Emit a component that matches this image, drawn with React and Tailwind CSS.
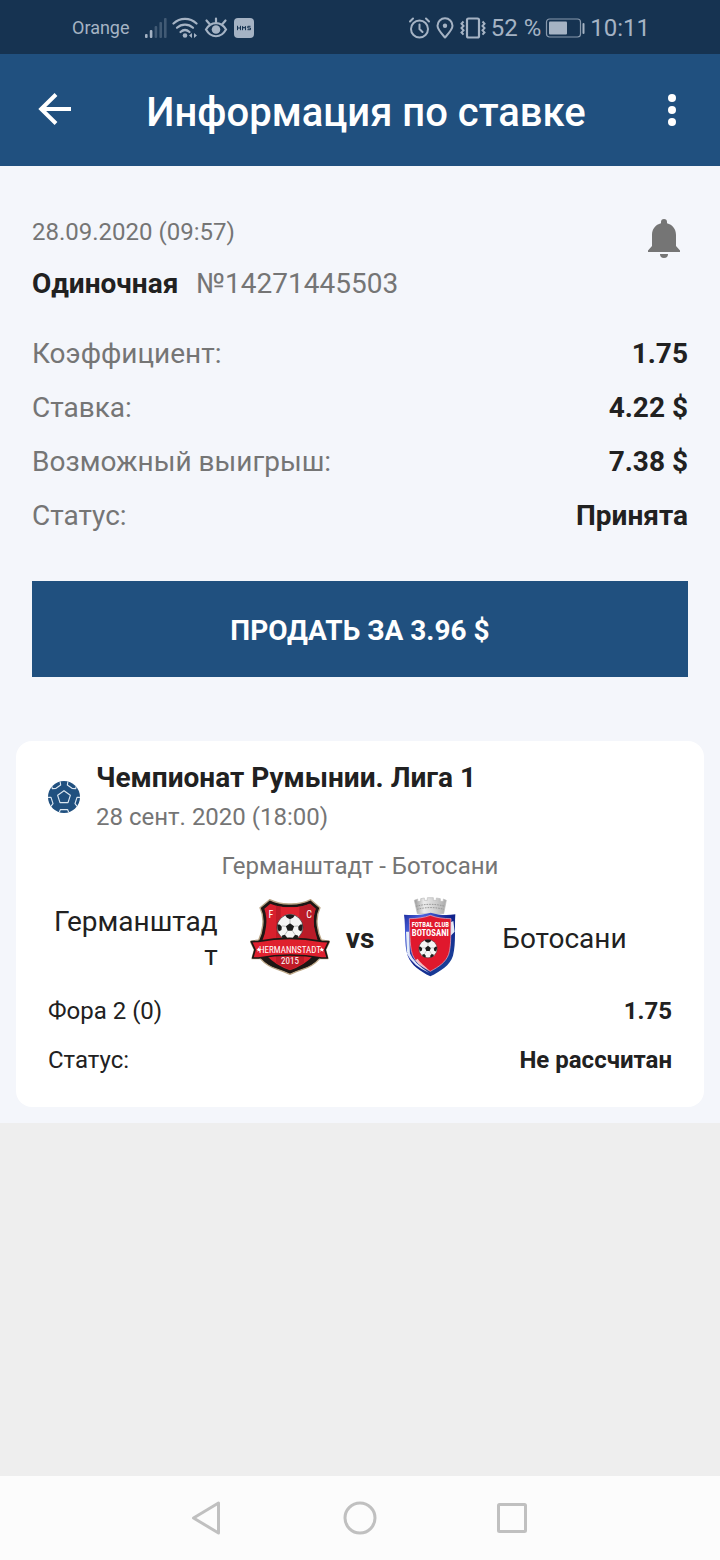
import React from "react";

function SignalIcon() {
  return (
    <svg viewBox="0 0 22 20" className="h-5 w-[22px]" fill="currentColor" aria-hidden="true">
      <rect x="0" y="16" width="2.6" height="4" rx="1" />
      <rect x="4.8" y="12" width="2.6" height="8" rx="1" />
      <g opacity="0.3">
        <rect x="9.6" y="8" width="2.6" height="12" rx="1" />
        <rect x="14.4" y="4" width="2.6" height="16" rx="1" />
        <rect x="19" y="0" width="2.6" height="20" rx="1" />
      </g>
    </svg>
  );
}

function WifiIcon() {
  return (
    <svg viewBox="0 0 26 22" className="h-[22px] w-[26px]" fill="none" stroke="currentColor" strokeWidth="2.2" strokeLinecap="round" aria-hidden="true">
      <path d="M1.5 6.5C8 .3 18 .3 24.500 6.500" />
      <path d="M5 10.800c4.600-4.200 11.400-4.200 16 0" />
      <path d="M8.500 15c2.700-2.400 6.300-2.400 9 0" />
      <circle cx="13" cy="18.500" r="2.300" fill="currentColor" stroke="none" />
      <path d="M17 18.500l3-2.500v5zM25 18.500l-3-2.500v5z" fill="currentColor" stroke="none" />
    </svg>
  );
}

function EyeIcon() {
  return (
    <svg viewBox="0 0 24 22" className="h-[22px] w-6" fill="none" stroke="currentColor" strokeWidth="2.2" strokeLinecap="round" aria-hidden="true">
      <path d="M2 12.500C7 4 17 4 22 12.500 17 21.500 7 21.500 2 12.500z" />
      <circle cx="12" cy="12.500" r="4.300" fill="currentColor" stroke="none" />
      <path d="M12 5V1.500M5.500 7L2.500 3.500M18.500 7l3-3.500" />
    </svg>
  );
}

function HmsIcon() {
  return (
    <svg viewBox="0 0 20 20" className="h-5 w-5" aria-hidden="true">
      <rect width="20" height="20" rx="4" fill="currentColor" />
      <g fill="none" stroke="#163351" strokeWidth="1">
        <path d="M3.500 7.800v4.400M6.500 7.800v4.400M3.500 10h3M8.500 12.200V8.300l1.500 2 1.500-2v3.900M16.500 8.300h-2.700V10h2.700v1.700h-3" />
      </g>
    </svg>
  );
}

function AlarmIcon() {
  return (
    <svg viewBox="0 0 22 22" className="h-[22px] w-[22px]" fill="none" stroke="currentColor" strokeWidth="2" strokeLinecap="round" aria-hidden="true">
      <circle cx="10.500" cy="12" r="8.500" />
      <path d="M10.500 7.500V12l3 3M1 4.500L4 1.500M20 4.500l-3-3" />
    </svg>
  );
}

function LocationIcon() {
  return (
    <svg viewBox="0 0 18 22" className="h-[22px] w-[18px]" fill="none" stroke="currentColor" strokeWidth="2" strokeLinejoin="round" aria-hidden="true">
      <path d="M9 20.500C5 16 1.500 12.500 1.500 8.800a7.500 7.500 0 0 1 15 0c0 3.700-3.500 7.200-7.500 11.700z" />
      <circle cx="9" cy="8.800" r="2.200" fill="currentColor" stroke="none" />
    </svg>
  );
}

function VibrateIcon() {
  return (
    <svg viewBox="0 0 28 22" className="h-[22px] w-7" fill="none" stroke="currentColor" aria-hidden="true">
      <rect x="8" y="1.500" width="12" height="19" rx="1.500" strokeWidth="2.200" />
      <path d="M4.500 4.500l-2 2.200 2 2.200-2 2.200 2 2.200-2 2.200 2 2.200M23.500 4.500l2 2.200-2 2.200 2 2.200-2 2.200 2 2.200-2 2.200" strokeWidth="2" />
    </svg>
  );
}

function BatteryIcon() {
  return (
    <svg viewBox="0 0 40 20" className="h-5 w-10" aria-hidden="true">
      <rect x="1.500" y="1" width="34" height="18" rx="3" fill="none" stroke="currentColor" strokeWidth="1.200" opacity="0.8" />
      <rect x="4" y="3.500" width="18" height="13" rx="1" fill="currentColor" />
      <rect x="37.500" y="5" width="2" height="11" rx="1" fill="currentColor" />
    </svg>
  );
}

function StatusBar() {
  return (
    <div className="flex h-[54px] items-center justify-between bg-[#163351] pt-0.5 pr-[70px] pl-[72px] text-[#a5b3c4]">
      <div className="flex items-center">
        <span className="mr-[15px] text-lg">Orange</span>
        <SignalIcon />
        <span className="ml-[5px] flex items-center gap-1.5">
          <WifiIcon />
          <EyeIcon />
          <HmsIcon />
        </span>
      </div>
      <div className="flex items-center text-2xl">
        <span className="flex items-center gap-[5px]">
          <AlarmIcon />
          <LocationIcon />
          <VibrateIcon />
        </span>
        <span className="mx-1">52 %</span>
        <BatteryIcon />
        <span className="ml-[5px]">10:11</span>
      </div>
    </div>
  );
}

function Header() {
  return (
    <header className="flex h-28 items-center justify-between bg-[#20507f] px-8 text-white">
      <button type="button" aria-label="Назад" className="flex h-12 w-11 items-center">
        <svg viewBox="0 0 44 48" className="h-12 w-11" fill="none" stroke="currentColor" strokeWidth="4" aria-hidden="true">
          <path d="M39 23H9M24 8.500L9.200 23 24 37.500" />
        </svg>
      </button>
      <h1 className="pt-1.5 text-[40px] leading-12 font-medium">Информация по ставке</h1>
      <button type="button" aria-label="Меню" className="flex h-12 w-8 items-center justify-center">
        <svg viewBox="0 0 8 32" className="h-8 w-2" fill="currentColor" aria-hidden="true">
          <circle cx="4" cy="4" r="4" />
          <circle cx="4" cy="16" r="4" />
          <circle cx="4" cy="28" r="4" />
        </svg>
      </button>
    </header>
  );
}

const details = [
  ["Коэффициент:", "1.75"],
  ["Ставка:", "4.22 $"],
  ["Возможный выигрыш:", "7.38 $"],
  ["Статус:", "Принята"],
];

function BetSummary() {
  return (
    <section className="px-8 pt-12">
      <div className="flex items-start justify-between">
        <div>
          <p className="text-2xl leading-9 text-[#757575]">28.09.2020 (09:57)</p>
          <p className="mt-4 flex gap-[18px] text-[28px] leading-9">
            <span className="font-bold">Одиночная</span>
            <span className="text-[#757575]">№14271445503</span>
          </p>
        </div>
        <button type="button" aria-label="Уведомления" className="flex h-12 w-12 items-center justify-center pt-0.5 text-[#757575]">
          <svg viewBox="0 0 32 40" className="h-10 w-8" fill="currentColor" aria-hidden="true">
            <path d="M16 0a3 3 0 0 0-3 3v1.300C7.500 5.700 4 10 4 16v11L0 31.500V33h32v-1.500L28 27V16c0-6-3.500-10.300-9-11.700V3a3 3 0 0 0-3-3zM12 35a4 4 0 0 0 8 0z" />
          </svg>
        </button>
      </div>
      <dl className="mt-[25px] text-[28px] leading-[54px]">
        {details.map(([label, value]) => (
          <div key={label} className="flex justify-between">
            <dt className="text-[#757575]">{label}</dt>
            <dd className="font-bold">{value}</dd>
          </div>
        ))}
      </dl>
      <button type="button" className="mt-[38px] h-24 w-full bg-[#20507f] pt-1 text-[28px] font-bold text-white">
        ПРОДАТЬ ЗА 3.96 $
      </button>
    </section>
  );
}

function FootballIcon() {
  return (
    <svg viewBox="0 0 96 96" className="h-8 w-8 shrink-0" aria-hidden="true">
      <defs>
        <clipPath id="ball-outline"><circle cx="48" cy="48" r="48" /></clipPath>
      </defs>
      <circle cx="48" cy="48" r="48" fill="#20507f" />
      <g clipPath="url(#ball-outline)" fill="none" stroke="#dbe6f0" strokeWidth="3.500" strokeLinejoin="round">
        <path d="M48 29l19 14-7 22H36l-7-22z" />
        <path d="M11 15l2 8 11-1 14-10-2-12M85 15l-2 8-11-1-14-10 2-12" />
        <path d="M0 49l9 0 6 19-7 9M96 49l-9 0-6 19 7 9M33 96l4-10h22l4 10" />
      </g>
    </svg>
  );
}

function SoccerBall({ x, y, scale }) {
  return (
    <g transform={`translate(${x} ${y}) scale(${scale})`}>
      <circle r="19" fill="#f5f5f5" stroke="#333" strokeWidth="1" />
      <g fill="#1c1c1c">
        <path d="M0-6l6 4.500-2.500 6.500h-7L-6-1.500zM-7-17.500Q0-20 7-17.500L4.500-14 0-12l-4.500-2zM18.500-4q1 5-2 10l-4-2-.5-5 3-3zM-18.500-4q-1 5 2 10l4-2 .5-5-3-3zM12 14.500q-3 3-7 4l-.5-4 3-3.500 4 1zM-12 14.500q3 3 7 4l.5-4-3-3.500-4 1z" />
      </g>
      <path d="M0-6v-6M6-1.500l6-.5M3.500 5l4 6M-3.500 5l-4 6M-6-1.500l-6-.5" fill="none" stroke="#888" strokeWidth="0.800" />
    </g>
  );
}

function HermannstadtCrest() {
  return (
    <svg viewBox="30 36 240 240" className="h-20 w-20 shrink-0" role="img" aria-label="Германштадт">
      <path d="M89 44q28 14 61 13 33 1 62-13l28 24q-12 25-8 54 3 25 12 43l25 4-12 25 7 27-24-1q-22 24-52 33-22 7-38 15-17-8-38-15-30-9-52-33l-24 1 7-27-12-25 25-4q9-18 12-43 4-29-8-54z" fill="#1d1714" stroke="#bba687" strokeWidth="4" strokeLinejoin="round" />
      <path d="M91 56q28 12 59 11 32 1 60-11l17 15q-9 26-5 54 3 25 11 42l-14 46q-26 28-69 43-43-15-69-43l-14-46q8-17 11-42 4-28-5-54z" fill="#d8202d" />
      <path d="M108 62q21 5 42 5 22 0 42-5v172l-42 20-42-20z" fill="#be1b27" />
      <path d="M122 65q28 4 56 0v60h-56z" fill="#e02531" />
      <path d="M192 62l18-6 17 15q-9 26-5 54l11 42h-41z" fill="#b81c28" />
      <SoccerBall x={150} y={127} scale={2.05} />
      <path d="M34 170l21-1q93-18 190 0l21 1-11 24 7 25-17 0q-95-18-190 0l-17 0 7-25z" fill="#df202e" stroke="#1d1714" strokeWidth="5" strokeLinejoin="round" />
      <path d="M56 187l2 4 5 1-3 3 1 5-5-3-4 3 1-5-4-3 5-1zM245 187l2 4 5 1-3 3 1 5-5-3-4 3 1-5-4-3 5-1z" fill="#fff" />
      <g fill="#fff" fontFamily="'Roboto Condensed', 'Liberation Sans Narrow', Roboto, sans-serif" textAnchor="middle">
        <text x="93" y="98" fontSize="30">F</text>
        <text x="207" y="98" fontSize="30">C</text>
        <text x="150" y="203" fontSize="27">HERMANNSTADT</text>
        <text x="150" y="238" fontSize="27">2015</text>
      </g>
    </svg>
  );
}

function BotosaniCrest() {
  return (
    <svg viewBox="0 36 240 240" className="h-20 w-20 shrink-0" role="img" aria-label="Ботосани">
      <defs>
        <linearGradient id="crown" x1="0" x2="1">
          <stop offset="0" stopColor="#999" />
          <stop offset="0.300" stopColor="#ececec" />
          <stop offset="0.700" stopColor="#ccc" />
          <stop offset="1" stopColor="#aaa" />
        </linearGradient>
        <linearGradient id="shield-edge" x1="0" y1="0" x2="1" y2="1">
          <stop offset="0" stopColor="#1c2b9c" />
          <stop offset="0.200" stopColor="#4a62dd" />
          <stop offset="0.500" stopColor="#10218a" />
          <stop offset="1" stopColor="#1f4f9f" />
        </linearGradient>
      </defs>
      <path d="M73 46l10-4v7h9v-8l11-2v7h9v-8h18v8h9v-7l12 2v8h9v-7l9 4-8 40H82z" fill="url(#crown)" stroke="#bbb" strokeWidth="2" />
      <path d="M78 64c28-8 58-8 87 0M81 73c27-7 54-7 81 0" fill="none" stroke="#999" strokeWidth="3" strokeDasharray="5 3" />
      <path d="M42 89c30 3 56 1 80-6 24 7 47 9 74 5-3 38 3 86-7 124-9 29-37 46-68 62-31-16-57-33-68-62-12-39-5-83-11-123z" fill="url(#shield-edge)" />
      <path d="M48 140l3 62 9 10-3-72zM190 108l4 32-12 12v-40z" fill="#e3ecf8" />
      <path d="M50 205l8-3q14 33 60 62-50-21-68-59z" fill="#dfe5fb" />
      <path d="M58 101c22 0 45-3 63-10 18 7 39 10 62 10-2 37 2 77-7 107-9 24-29 37-55 51-26-14-45-27-54-51-9-30-7-70-9-107z" fill="#e0182d" stroke="#f0b8c6" strokeWidth="2" />
      <path d="M76 226c10 14 24 22 43 31-16-16-28-23-36-36z" fill="#fff" opacity="0.700" />
      <g fill="#fff" fontFamily="'Roboto Condensed', 'Liberation Sans Narrow', Roboto, sans-serif" fontWeight="700" textAnchor="middle">
        <text x="121" y="127" fontSize="20">FOTBAL CLUB</text>
        <text x="121" y="153" fontSize="26">BOTOSANI</text>
      </g>
      <SoccerBall x={114} y={191} scale={1.45} />
    </svg>
  );
}

function MatchCard() {
  return (
    <article className="mx-4 mt-16 mb-4 rounded-2xl bg-white px-8 pt-[19px] pb-[22px]">
      <div className="flex items-center gap-4">
        <FootballIcon />
        <div>
          <h2 className="text-[28px] leading-9 font-bold">Чемпионат Румынии. Лига 1</h2>
          <p className="mt-[5px] text-2xl leading-8 text-[#757575]">28 сент. 2020 (18:00)</p>
        </div>
      </div>
      <p className="mt-[15px] text-center text-2xl leading-9 text-[#757575]">Германштадт - Ботосани</p>
      <div className="mt-[13px] flex items-center text-[28px] leading-[34px]">
        <p className="min-w-0 flex-1 pt-1 text-right break-all">Германштадт</p>
        <div className="mx-8 flex items-center gap-4">
          <HermannstadtCrest />
          <span className="pt-1 font-bold">vs</span>
          <BotosaniCrest />
        </div>
        <p className="min-w-0 flex-1 pt-1 break-all">Ботосани</p>
      </div>
      <dl className="mt-2.5 text-2xl leading-[49px]">
        <div className="flex justify-between">
          <dt>Фора 2 (0)</dt>
          <dd className="font-bold">1.75</dd>
        </div>
        <div className="flex justify-between">
          <dt>Статус:</dt>
          <dd className="font-bold">Не рассчитан</dd>
        </div>
      </dl>
    </article>
  );
}

function NavigationBar() {
  return (
    <nav className="flex h-[84px] items-center justify-center gap-[120px] bg-[#fcfcfc] text-[#c0c0c0]">
      <button type="button" aria-label="Назад">
        <svg viewBox="0 0 32 36" className="h-9 w-8" fill="none" stroke="currentColor" strokeWidth="3" strokeLinejoin="round" aria-hidden="true">
          <path d="M2.500 18L27.500 3v30z" />
        </svg>
      </button>
      <button type="button" aria-label="Домой">
        <svg viewBox="0 0 34 34" className="h-[34px] w-[34px]" fill="none" stroke="currentColor" strokeWidth="3" aria-hidden="true">
          <circle cx="17" cy="17" r="15" />
        </svg>
      </button>
      <button type="button" aria-label="Последние приложения">
        <svg viewBox="0 0 32 32" className="h-8 w-8" fill="none" stroke="currentColor" strokeWidth="3" strokeLinejoin="round" aria-hidden="true">
          <rect x="1.500" y="2.500" width="27" height="27" rx="1" />
        </svg>
      </button>
    </nav>
  );
}

export default function App() {
  return (
    <div className="flex min-h-screen flex-col bg-[#eeeeee] font-['Roboto',sans-serif] text-[#212121]">
      <StatusBar />
      <Header />
      <main className="flex-1">
        <div className="flow-root bg-[#f4f6fb]">
          <BetSummary />
          <MatchCard />
        </div>
      </main>
      <NavigationBar />
    </div>
  );
}
